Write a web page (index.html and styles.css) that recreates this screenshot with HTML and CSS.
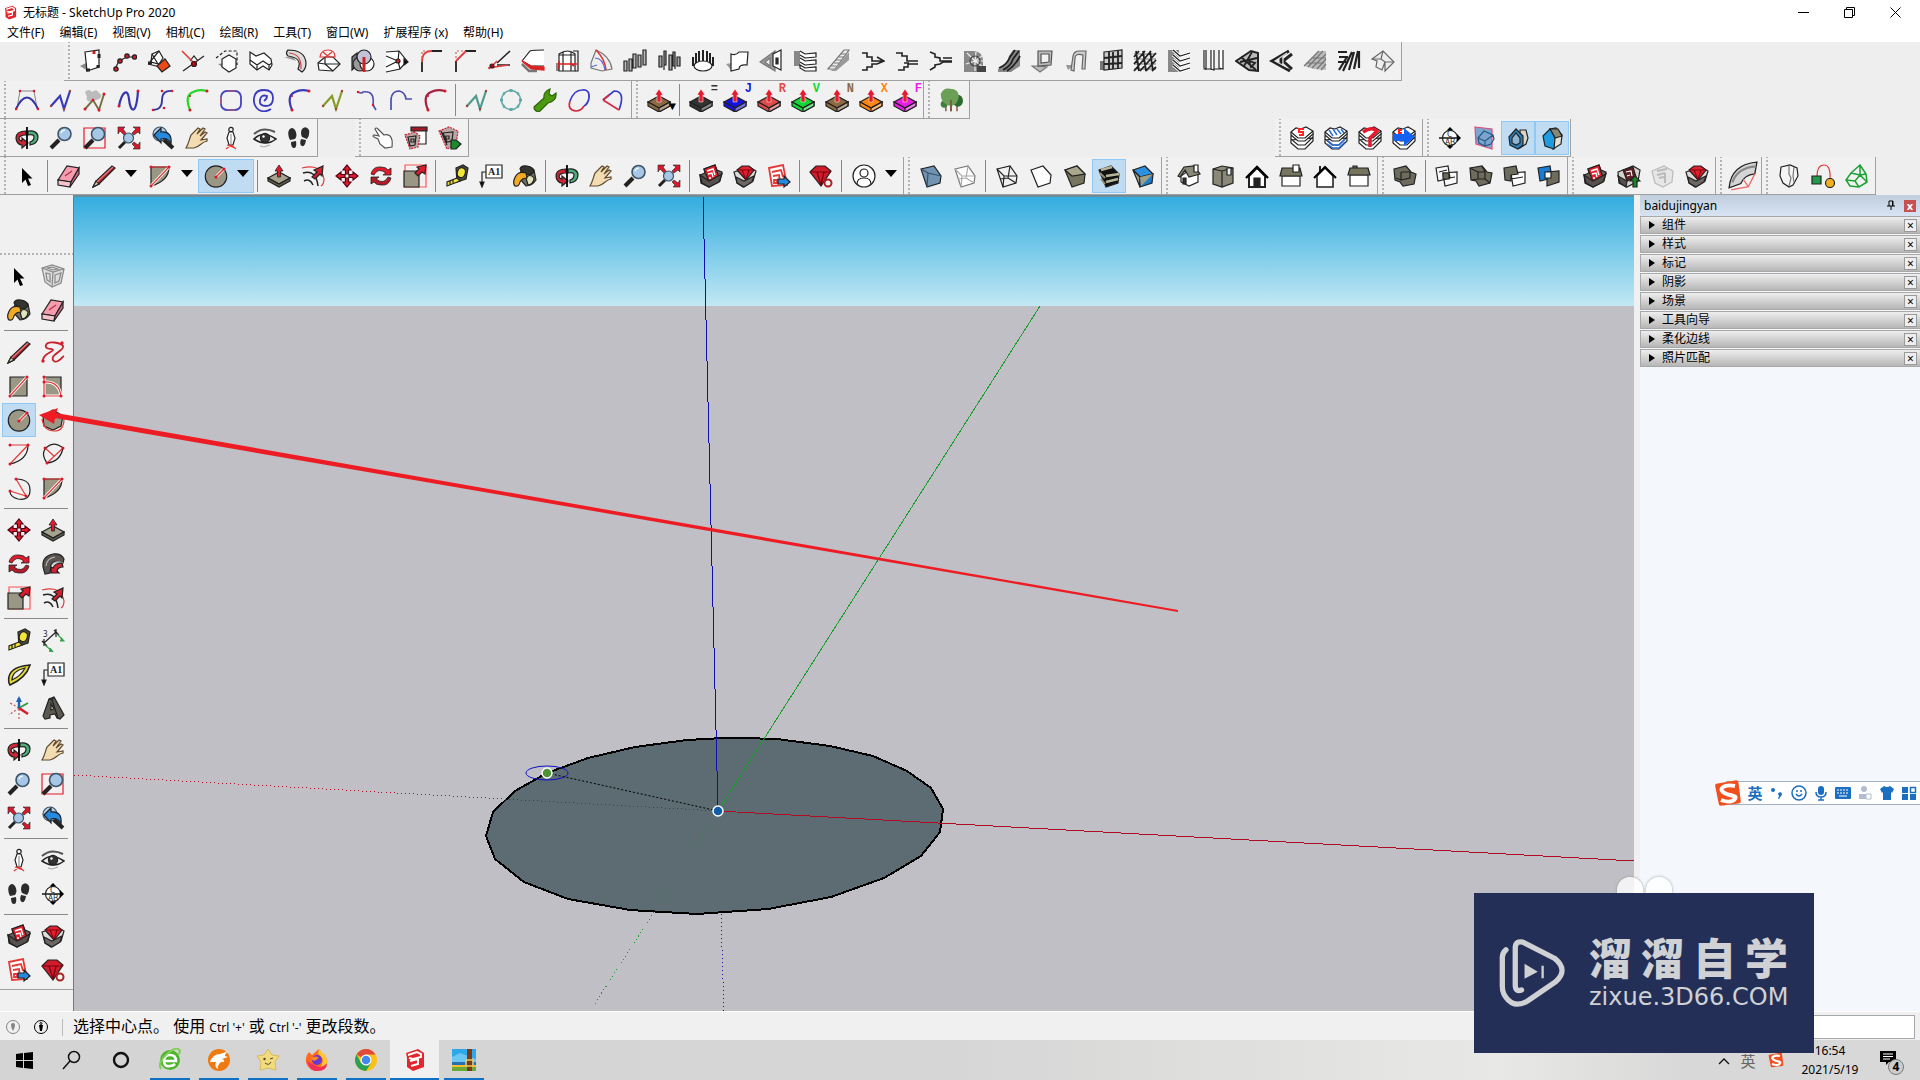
FILE: index.html
```html
<!DOCTYPE html>
<html lang="zh-CN">
<head>
    <meta charset="UTF-8">
    <meta name="viewport" content="width=device-width, initial-scale=1.0">
    <title>无标题 - SketchUp Pro 2020</title>
    <link rel="stylesheet" href="styles.css">
</head>
<body>
    <svg class="sprite" aria-hidden="true">
        <!-- logos -->
        <symbol id="sketchup" viewBox="0 0 24 24"><path d="M3 5 15 1l6 4v14l-11 4-6-4V10z" fill="#e4252c" stroke="none"/><path d="M5 7l9-3 4 2v3l-8 2-4-1M7 13l8-2v5l-7 2" stroke="#fff" stroke-width="2"/></symbol>
        <symbol id="sogou" viewBox="0 0 24 24"><path d="M2 4 19 1q2 0 2 2l2 16q0 2-2 2L6 23q-2 0-2-2L1 6q0-2 1-2z" fill="#f0501e" stroke="none"/><path d="M18 6C8 4 3 9 9 12s11 2 9 5-7 3-12 1" stroke="#fff" stroke-width="3.4"/></symbol>

        <!-- camera and basic tools -->
        <symbol id="select" viewBox="0 0 24 24"><path d="M7 4v15l3.500-3.500L13 22l3-1-3-6.500h4.500z" fill="#000" stroke="none"/></symbol>
        <symbol id="orbit" viewBox="0 0 24 24"><path d="M13 5c6-1 10 2 10 6s-3 7-8 8v-3c3-1 4-3 4-5s-2-3-6-2z" fill="#4fae7c"/><path d="M11 5C4 5 1 8 1 12s3 7 6 7v3l6-5-6-5v3c-2 0-3-2-3-3s2-3 7-3z" fill="#cf2535"/><path d="M12 1v22" stroke="#000" stroke-width="1.800"/></symbol>
        <symbol id="zoom" viewBox="0 0 24 24"><path d="M2 22l8-8" stroke="#222" stroke-width="4"/><circle cx="15.500" cy="8" r="6.500" fill="#a6c8e6" stroke="#3d5468" stroke-width="1.600"/><path d="M12 7q1-3 4-3" stroke="#fff"/></symbol>
        <symbol id="zoom-window" viewBox="0 0 24 24"><path d="M1 2h21v20H1z" stroke="#e8192c"/><path d="M2 22l8-8" stroke="#222" stroke-width="4"/><circle cx="15" cy="8" r="6.500" fill="#a6c8e6" stroke="#3d5468" stroke-width="1.600"/></symbol>
        <symbol id="zoom-extents" viewBox="0 0 24 24"><path d="M1 1h7L6 3l3 4-2 2-4-4-2 3zM23 1v7l-2-2-4 3-2-2 4-4-3-2zM23 23h-7l2-2-3-3 2-2 4 3 2-3z" fill="#d8192b" stroke-width=".6"/><path d="M2 22l6-6" stroke="#222" stroke-width="3"/><circle cx="11.500" cy="12" r="5" fill="#a6c8e6" stroke="#3d5468"/></symbol>
        <symbol id="zoom-previous" viewBox="0 0 24 24"><path d="M12 13l10 9" stroke="#222" stroke-width="4"/><circle cx="9" cy="8" r="7" fill="#b4d0e8" stroke="#3d5468"/><path d="M3 9l7-7v4c8-1 11 4 10 12-2-5-5-6-10-5v4z" fill="#258be0"/></symbol>
        <symbol id="pan" viewBox="0 0 24 24"><path d="M1 22c3-5 3-8 5-13l7-7 2 1-3 5 6-6 2 1-5 7 5-4 2 1-6 7 6-1v2c-6 1-7 6-13 7z" fill="#f4dcb2" stroke="#5d4a30"/></symbol>
        <symbol id="position-camera" viewBox="0 0 24 24"><circle cx="12" cy="3.500" r="2.200" fill="#fff"/><path d="M10 6h4l2 6-2 7h-4l-2-7z" fill="#fff"/><path d="M12 8v10" stroke="#999"/><path d="M7 23l5-4 5 4M8 19l8 3" stroke="#e33"/></symbol>
        <symbol id="look-around" viewBox="0 0 24 24"><path d="M1 13q9-9 22 0-10 8-22 0z" fill="#eee" stroke-width="1.600"/><circle cx="12" cy="12" r="4.600" fill="#333"/><circle cx="10.500" cy="10.500" r="1.200" fill="#fff" stroke="none"/><path d="M1 8q9-8 21-2" stroke="#555" stroke-width="2"/><path d="M7 20l4 1 6-2" stroke="#aaa"/></symbol>
        <symbol id="walk" viewBox="0 0 24 24"><path d="M2 4q3-4 6 0 3 5 0 9l-5 1Q0 8 2 4zM4 16l5-1q1 7-2 7t-3-6zM15 3q4-4 7 1 1 5-2 9l-5-2q-2-4 0-8zM14 13l5 1q-1 7-4 6t-1-7z" fill="#2b2b2b" stroke="none"/></symbol>
        <symbol id="eraser" viewBox="0 0 24 24"><path d="M1 16 10 2l12 2-8 14z" fill="#f79cae"/><path d="M1 16v5l12 2 1-5z" fill="#f6c3cc"/><path d="M14 18l-1 5 9-13V4z" fill="#cf6c83"/><path d="M8 12l7-5" stroke="#a34"/></symbol>
        <symbol id="pencil" viewBox="0 0 24 24"><path d="M1 23l3-6L20 2l3 2L7 20z" fill="#b4222c"/><path d="M1 23l3-6 3 3z" fill="#e9cfa4"/><path d="M5 18 21 3" stroke="#e87c80"/></symbol>
        <symbol id="freehand" viewBox="0 0 24 24"><path d="M2 21C1 14 12 12 12 10S3 10 5 5s15-2 17 1-9 8-10 11 1 6 5 4 4-4 6-5" stroke="#c8202e" stroke-width="1.800"/><g class="dots"><circle cx="2" cy="21" r="1.700"/><circle cx="21" cy="3" r="1.700"/></g></symbol>
        <symbol id="rectangle" viewBox="0 0 24 24"><path d="M3 3h17v19H3z" fill="#9a9885"/><path d="M3 22 20 3" stroke="#fff" stroke-width="3"/><path d="M3 22 20 3" stroke="#e33a3a"/><g class="dots"><circle cx="3" cy="22" r="1.500"/><circle cx="20" cy="3" r="1.500"/></g></symbol>
        <symbol id="rotated-rectangle" viewBox="0 0 24 24"><path d="M3 3h17v19H3z" fill="#9a9885"/><path d="M3 3v19h17M3 8q15-1 17 14" stroke="#fff" stroke-width="3"/><path d="M3 3v19h17M3 8q15-1 17 14" stroke="#e33a3a"/><g class="dots"><circle cx="3" cy="3" r="1.500"/><circle cx="3" cy="8" r="1.500"/><circle cx="3" cy="22" r="1.500"/><circle cx="20" cy="22" r="1.500"/></g></symbol>
        <symbol id="circle" viewBox="0 0 24 24"><circle cx="12" cy="12.500" r="10.700" fill="#9a9885"/><path d="M12 13 20 5" stroke="#fff" stroke-width="3"/><path d="M12 13 20 5" stroke="#e33a3a" stroke-width="1.600"/><g class="dots"><circle cx="12" cy="13" r="1.600"/><circle cx="20" cy="5" r="1.600"/></g></symbol>
        <symbol id="polygon" viewBox="0 0 24 24"><path d="M2 8 12 2l10 6-2 10-8 4-9-4z" fill="#9a9885"/><path d="M1 11q2 12 12 12t10-12M12 12l8-6" stroke="#e33a3a"/></symbol>
        <symbol id="arc" viewBox="0 0 24 24"><path d="M21 3q0 15-18 19"/><path d="M3 22 21 3H3" stroke="#e33a3a"/><g class="dots"><circle cx="3" cy="3" r="1.500"/><circle cx="21" cy="3" r="1.500"/><circle cx="3" cy="22" r="1.500"/></g></symbol>
        <symbol id="arc-2-point" viewBox="0 0 24 24"><path d="M6 21Q-1 11 6 5T22 6"/><path d="M6 21 22 6M4 6l9 8" stroke="#e33a3a"/><path d="M6 21q13-1 16-15"/><g class="dots"><circle cx="6" cy="21" r="1.500"/><circle cx="22" cy="6" r="1.500"/><circle cx="4" cy="6" r="1.500"/></g></symbol>
        <symbol id="arc-3-point" viewBox="0 0 24 24"><path d="M9 3q14 0 14 11T11 23q-8-2-8-8"/><path d="M9 3 19 20 3 15" stroke="#e33a3a"/><g class="dots"><circle cx="9" cy="3" r="1.500"/><circle cx="19" cy="20" r="1.500"/><circle cx="3" cy="15" r="1.500"/></g></symbol>
        <symbol id="pie" viewBox="0 0 24 24"><path d="M3 3h18q0 14-18 19z" fill="#9a9885"/><path d="M3 22 21 3" stroke="#fff" stroke-width="3"/><path d="M3 22 21 3H3" stroke="#e33a3a"/><g class="dots"><circle cx="3" cy="3" r="1.500"/><circle cx="21" cy="3" r="1.500"/><circle cx="3" cy="22" r="1.500"/></g></symbol>
        <symbol id="push-pull" viewBox="0 0 24 24"><path d="M1 14l11-6 11 6-11 6z" fill="#a5a28e"/><path d="M1 14v3l11 6 11-6v-3l-11 6z" fill="#5d5c4c"/><path d="M10.500 13V7H8l4-6 4 6h-2.500v6z" fill="#e01b2c" stroke-width=".8"/></symbol>
        <symbol id="offset" viewBox="0 0 24 24"><path d="M2 9q13-4 15 13M3 17q6-3 9 4" stroke="#222" stroke-width="1.500"/><path d="M1 4Q20-1 23 15q0 5-3 7" stroke="#e33a3a"/><path d="M11 13l5-5-3-2 9-4-1 10-2-2-5 5z" fill="#d11f2e"/></symbol>
        <symbol id="move" viewBox="0 0 24 24"><path d="M12 1l4 5h-2.500v4h-3V6H8zM12 23l4-5h-2.500v-4h-3v4H8zM1 12l5-4v2.500h4v3H6V16zM23 12l-5-4v2.500h-4v3h4V16z" fill="#e01b2c" stroke="#501"/></symbol>
        <symbol id="rotate" viewBox="0 0 24 24"><path d="M2 10Q4 2 12 3q5 0 7 3l3-2v7h-8l3-2q-8-6-12 2z" fill="#e01b2c" stroke-width=".8"/><path d="M22 14q-2 8-10 7-5 0-7-3l-3 2v-7h8l-3 2q8 6 12-2z" fill="#b51a28" stroke-width=".8"/></symbol>
        <symbol id="scale" viewBox="0 0 24 24"><path d="M2 1h21v22H2z" stroke="#f55"/><path d="M1 7h15v16H1z" fill="#9a9885"/><path d="M12 9l4-4-2-2 9-2-1 9-3-2-4 4z" fill="#e01b2c"/></symbol>
        <symbol id="follow-me" viewBox="0 0 24 24"><path d="M2 15Q1 4 12 2q8-1 11 5l-1 4q-9-4-12 2l-1 8-5 1z" fill="#5a5450"/><path d="M5 14Q6 6 14 5M11 13q4-5 11-2" stroke="#bbb"/><path d="M10 21v-6l2 1q2-5 9-5l1 4q-5 0-6 4l2 2z" fill="#cf2535"/></symbol>
        <symbol id="tape-measure" viewBox="0 0 24 24"><path d="M11 4l7-3 5 3-2 11-9 3z" fill="#4a4a3c"/><ellipse cx="16.500" cy="8.500" rx="4" ry="5" fill="#f2e53a" transform="rotate(18 16 8)"/><path d="M12 14 2 18v4l13-5z" fill="#f2e53a"/><path d="M5 17v4M8 16v3"/></symbol>
        <symbol id="dimension" viewBox="0 0 24 24"><path d="M3 15 15 4M1 13l5 5M13 2l5 5M3 11v7M15 1v8"/><path d="M4 17l7 6M16 6l6 6" stroke="#35a24b"/><path d="M20 10l3 3h-4M9 20l3 4-4-1" fill="#35a24b" stroke="#35a24b"/><text class="tiny" x="2" y="9">3</text></symbol>
        <symbol id="protractor" viewBox="0 0 24 24"><path d="M2 21Q-1 5 23 3 19 16 3 23z" fill="#e7d937" stroke-width="1.600"/><path d="M5 18Q5 9 18 6 14 14 5 18z" fill="#f1f1f1"/></symbol>
        <symbol id="text-label" viewBox="0 0 24 24"><path d="M7 1h16v13H7z" fill="#fff"/><path d="M7 8H3v12"/><path d="M1 18h4l-2 5z" fill="#000"/><text class="tiny serif" x="9" y="11">A1</text></symbol>
        <symbol id="axes" viewBox="0 0 24 24"><path d="M12 12 2 19M12 12l-9-5M12 13v10" stroke-dasharray="2 2" stroke="#c55"/><path d="M12 12V2" stroke="#1c62b8" stroke-width="2.400"/><path d="M9 6l3-6 3 6z" fill="#1c62b8" stroke="none"/><path d="M12 12l9-5" stroke="#2a9c46" stroke-width="2"/><path d="M12 12l9 6" stroke="#d8192b" stroke-width="2.400"/></symbol>
        <symbol id="text-3d" viewBox="0 0 24 24"><path d="M2 20 8 3l5-2 10 18-4 4-3-1-2-4-5 1v3l-5 1z" fill="#5c5a50"/><path d="M10 14V8l3 5z" fill="#ddd"/><path d="M8 3l3 1 6 18M13 1l-2 3"/></symbol>
        <symbol id="paint-bucket" viewBox="0 0 24 24"><path d="M8 5q8-5 13 1l2 10q-4 6-10 6l-6-7z" fill="#6d6d60"/><path d="M7 5q1-4 7-3t7 6q-4 4-8 2T7 5z" fill="#35352f"/><path d="M13 14q4-5 8 0 0 6-6 7z" fill="#e3e4bd"/><path d="M13 9Q4 6 1 16q-1 4 1 6 4 1 5-4 2-4 7-4z" fill="#f2ab22"/></symbol>
        <symbol id="component" viewBox="0 0 24 24"><path d="M1 4l10-3 12 4-3 14-9 4-7-5z" fill="#ddd" stroke="#888"/><path d="M1 4l11 4 11-3M12 8l-1 15M5 9l4 1v8l-3-2zM14 11l6-2-2 8-4 2zM6 4l5-1 6 2-5 1z" stroke="#888"/></symbol>
        <symbol id="section-plane" viewBox="0 0 24 24"><circle cx="12" cy="12" r="7.500" fill="#fff"/><path d="M1 12h20" stroke-width="1.600"/><path d="M8.500 4.500 12 1l3.500 3.500zM8.500 19.500 12 23l3.500-3.500zM19 8v8l4-4z" fill="#000" stroke="none"/><text class="tiny" x="9" y="11">C</text><text class="tiny" x="7" y="19">AB</text></symbol>

        <!-- warehouse and extension tools -->
        <symbol id="warehouse" viewBox="0 0 24 24"><path d="M1 11l5-2-1-4 11-4 2 5 5 2-2 9-11 6-8-4z" fill="#6b5f5c"/><path d="M5 5l11-4 4 13-10 4z" fill="#e0222f"/><path d="M8 7l6-2 2 6M9 10l4-1 1 4M10 14h2" stroke="#fff" stroke-width="1.400"/><path d="M1 11l9 6 13-7-3 8-10 5-7-4z" fill="#57504e"/></symbol>
        <symbol id="warehouse-extension" viewBox="0 0 24 24"><path d="M1 8l6-2 9-3 7 4-3 10-10 6-6-4z" fill="#dedbd8"/><path d="M4 6l5-4h7l5 4-8 10z" fill="#e0222f"/><path d="M4 6h17M9 6l4 10 3-10" stroke="#801"/><path d="M3 13l8 4 10-5-2 6-8 5-7-4z" fill="#6d6764"/></symbol>
        <symbol id="send-layout" viewBox="0 0 24 24"><path d="M2 4l14-3 4 20-15 1z" fill="#fff" stroke="#e33a3a" stroke-width="1.800"/><path d="M5 8l9-2 2 7M6 12l6-1 1 7M7 16h3v3H7z" stroke="#e33a3a" stroke-width="1.800"/><path d="M11 15h6v-3l6 6-6 5v-3h-6z" fill="#258be0"/></symbol>
        <symbol id="extension-manager" viewBox="0 0 24 24"><path d="M1 8l6-6h9l6 5-10 15z" fill="#d01b2a"/><path d="M1 8h21M8 8l4 13M15 8l-3 13" stroke="#701"/><circle cx="19" cy="19" r="3.500" fill="#f1f1f1" stroke="#a22" stroke-width="2"/></symbol>
        <symbol id="share-model" viewBox="0 0 24 24"><path d="M1 8l5-2 10-4 7 4-2 11-11 6-8-4z" fill="#d6d3cf"/><path d="M6 6l10-3 3 10-9 4z" fill="#5e2024"/><path d="M9 8l5-1 1 5M10 12l3-1" stroke="#fff"/><path d="M1 12l9 5-1 6-6-4z" fill="#57504e"/><path d="M16 23v-6h-3l5-5 5 5h-3v6z" fill="#178a28"/></symbol>
        <symbol id="share-component" viewBox="0 0 24 24"><path d="M1 7l12-5 9 5-1 11-9 5-8-4z" fill="#e6e6e6" stroke="#bbb"/><path d="M6 7l10-2M6 11l8-2M14 9v10M8 14l5-1" stroke="#bbb" stroke-width="2"/></symbol>
        <symbol id="user" viewBox="0 0 24 24"><circle cx="12" cy="12" r="11" fill="#fff"/><circle cx="12" cy="9" r="4"/><path d="M5 20q0-6 7-6t7 6"/></symbol>
        <symbol id="hand-touch" viewBox="0 0 24 24"><path d="M5 3l4 7-5-1q-2 1 0 2l4 2 2 5 5 4 7-1q1-8-2-11-3-2-6-1L8 3Q6 1 5 3z" fill="#fff" stroke="#555"/></symbol>
        <symbol id="list-component" viewBox="0 0 24 24"><path d="M10 3h12v15H10z" fill="#fff"/><path d="M7 1h16v4H7z" fill="#9d1b26"/><path d="M1 9l10-3 5 4-2 11-8 2z" fill="#b9a7a5" stroke="#c9202e" stroke-dasharray="2 1"/><path d="M4 11l8-1-1 9-5 1zM7 13h3v3H7z"/></symbol>
        <symbol id="export-component" viewBox="0 0 24 24"><path d="M1 5l10-4 9 4-2 14-9 4z" fill="#b9a7a5" stroke="#c9202e" stroke-dasharray="2 1"/><path d="M5 7l10-1-1 9-5 1zM8 10h3v3H8zM3 5l6 14"/><path d="M13 14h5l5 4-5 5h-5z" fill="#1a8a2c"/></symbol>

        <!-- shape and building tools -->
        <symbol id="sheet" viewBox="0 0 24 24"><path d="M1 17l8-4v9z" fill="#888" stroke="none"/><path d="M6 3l14-2v17L8 22z" fill="#fff"/><path d="M15 2v3" stroke="#c22" stroke-width="3"/><path d="M20 5v4M19 16v3M7 21h4" stroke-width="3"/></symbol>
        <symbol id="nodes" viewBox="0 0 24 24"><path d="M2 20 6 12 14 8h8"/><g fill="#d8192b"><circle cx="3" cy="20" r="2.200"/><circle cx="7" cy="12" r="2.200"/><circle cx="14" cy="7" r="2.200"/><circle cx="21.500" cy="8" r="2.200"/></g></symbol>
        <symbol id="face-box" viewBox="0 0 24 24"><path d="M5 5l7-3 4 7-4 6-8-2z" fill="#fff"/><path d="M5 5l6 10M12 2 3 13M1 15l12 3"/><path d="M10 17l8-7 5 7-8 6z" fill="#ee4a16"/><path d="M1 14h4" stroke-width="3"/></symbol>
        <symbol id="cross" viewBox="0 0 24 24"><path d="M2 22 23 7M9 12l4-5 4 5"/><path d="M1 2l12 12" stroke="#e33a3a" stroke-width="1.600"/><circle cx="13" cy="15" r="2.500" fill="#b01"/></symbol>
        <symbol id="hexagon" viewBox="0 0 24 24"><path d="M3 15l8-1 2 8z" fill="#888" stroke="none"/><path d="M1 9 10 2h12v14" stroke-dasharray="3 2"/><path d="M7 10l7-4 7 4v9l-7 4-7-5z" fill="#fff"/></symbol>
        <symbol id="stretch" viewBox="0 0 24 24"><path d="M1 3v12l7 6 6-4 6 4 3-5-1-6-7-6-8 3z" fill="#fff"/><path d="M1 11l7 5 6-4 6 4 3-2M8 16v5M20 16v5"/></symbol>
        <symbol id="pipe" viewBox="0 0 24 24"><path d="M1 8h9l3 4z" fill="#999" stroke="none"/><path d="M5 1q17 0 18 13 0 6-4 9l-4-3q5-11-10-13-3-3 0-6z" fill="#ddd"/><path d="M6 4q13 1 12 16" stroke="#c44"/></symbol>
        <symbol id="dome-box" viewBox="0 0 24 24"><path d="M1 14l7-6h8l7 7-7 7-14-1z" fill="#fff"/><path d="M8 8v7l8 7M1 14l7 1 15 0"/><path d="M3 8q1-7 8-7t7 7zM3 8h15M6 3l6 5M15 3 9 8" stroke="#e33a3a"/></symbol>
        <symbol id="sphere-cut" viewBox="0 0 24 24"><path d="M1 8l5-4v12l-5 5z" fill="#777"/><circle cx="9" cy="15" r="7" fill="#999"/><circle cx="16" cy="15" r="7" fill="#fff"/><circle cx="13" cy="8" r="7" fill="#c3c3d8"/><path d="M13 8v15" stroke="#c22" stroke-width="3"/></symbol>
        <symbol id="prism" viewBox="0 0 24 24"><path d="M1 3l13-1 8 10-7 8-14 3" fill="#fff"/><path d="M1 7l12 5-12 6M14 2l-1 10 2 8"/><circle cx="13" cy="12" r="2" fill="#d22"/><path d="M19 10l4 3-4 3z" fill="#000"/></symbol>
        <symbol id="fillet" viewBox="0 0 24 24"><path d="M3 23V13M12 2h11" stroke-width="1.800"/><path d="M3 13Q3 2 13 2" stroke="#e33a3a" stroke-width="1.800"/><path d="M3 9V2h7" stroke-dasharray="2 2" stroke="#c66"/></symbol>
        <symbol id="chamfer" viewBox="0 0 24 24"><path d="M3 23V12M12 2h11" stroke-width="1.800"/><path d="M3 12 13 2" stroke="#e33a3a" stroke-width="1.800"/><path d="M3 9V2h7" stroke-dasharray="2 2" stroke="#c66"/></symbol>
        <symbol id="angle" viewBox="0 0 24 24"><path d="M10 14 23 2M10 16h13" stroke-width="1.600"/><path d="M1 19l20-3M2 20l8-8" stroke="#e33a3a" stroke-width="1.600"/><circle cx="5" cy="17" r="2" fill="#b01"/></symbol>
        <symbol id="slab" viewBox="0 0 24 24"><path d="M1 9 9 2l14-1v16H10z" fill="#fff" stroke="none"/><path d="M1 12 9 2q3-1 14-1M1 12l9 5h13"/><path d="M1 12l9 5 13 1v3l-13-1z" fill="#d22" stroke="#d22"/><path d="M1 15l7 7h8" stroke="#777" stroke-width="2.500"/></symbol>
        <symbol id="barrel" viewBox="0 0 24 24"><path d="M1 14h4v8H1z" fill="#888" stroke="none"/><path d="M4 5q9-6 16 0v17H4z" fill="#fff"/><path d="M8 3v19M16 3v19M4 6h16M18 2h5v20h-3"/><path d="M4 15h18M4 12v8M15 14l4 3" stroke="#d22" stroke-width="1.600"/></symbol>
        <symbol id="sail" viewBox="0 0 24 24"><path d="M2 14 7 1q14 6 16 19l-10 2-11-3z" fill="#eee" stroke="#777"/><path d="M7 1q9 9 10 20" stroke="#d33" stroke-width="1.600"/><path d="M6 9q8 0 10 12M2 18l6-2" stroke="#66c"/></symbol>
        <symbol id="columns" viewBox="0 0 24 24"><path d="M1 12h3v10H1zM6 10h3v12H6zM10 5h3v14h-3zM15 6h3v12h-3zM20 1h3v15h-3z" fill="#bbb"/></symbol>
        <symbol id="posts" viewBox="0 0 24 24"><path d="M2 7h3v11H2zM7 2h2v14H7zM12 6h3v15h-3zM16 3h2v14h-2zM20 8h3v9h-3zM7 10v11M18 9v11" fill="#aaa"/></symbol>
        <symbol id="round-posts" viewBox="0 0 24 24"><path d="M2 8v9M5 4v12M8 2v14M12 1v15M16 2v14M19 4v12M22 8v9" stroke-width="2"/><ellipse cx="12" cy="17" rx="9" ry="5" fill="#fff"/></symbol>
        <symbol id="curved-wall" viewBox="0 0 24 24"><path d="M1 15l6-1v8z" fill="#999" stroke="none"/><path d="M6 5q5 2 8-2h9l-1 13q-8-1-8 4l-8 2z" fill="#fff"/></symbol>
        <symbol id="window-wall" viewBox="0 0 24 24"><path d="M1 13 16 2v20z" fill="#999" stroke="#777"/><path d="M6 13l5-4v8z" fill="#f1f1f1" stroke="#777"/><path d="M14 5l8-4v20l-8-4z" fill="#fff"/><path d="M17 9h2v6h-2z" fill="#333"/></symbol>
        <symbol id="shelves" viewBox="0 0 24 24"><path d="M1 2h6v15H1z" fill="#888" stroke="none"/><path d="M7 2l5 3 11-1v4l-11 1-5-3M7 9l5 3 11-1v4l-11 1-5-3M7 16l5 3 11-1v4H12l-5-3z" fill="#fff"/></symbol>
        <symbol id="ramp" viewBox="0 0 24 24"><path d="M1 20 17 1h5L8 20z" fill="#eee" stroke="#777"/><path d="M3 22 8 20 22 3v8L9 22z" fill="#999" stroke="none"/><path d="M4 17h5M7 14h5M9 11h5M12 8h5M14 5h5" stroke="#777"/></symbol>
        <symbol id="stairs-up" viewBox="0 0 24 24"><path d="M1 4h5v4h5v4h12l-7-4M1 21h5v-3h5v-3h5l7-3" stroke-width="1.600"/></symbol>
        <symbol id="stairs-landing" viewBox="0 0 24 24"><path d="M1 4h6v3h5v5h11M3 21h6v-3h4v-3h10M9 14h5" stroke-width="1.600"/></symbol>
        <symbol id="stairs-branch" viewBox="0 0 24 24"><path d="M1 3l5 2v3l5 1v3h12M1 21l5-3v-2l5-1 3-2h9M14 9h9" stroke-width="1.600"/></symbol>
        <symbol id="spiral-stairs" viewBox="0 0 24 24"><path d="M1 2h10q9 1 9 10v11H1z" fill="#888" stroke="none"/><path d="M12 12 4 4M12 12l1-9M12 12l7-5M12 12h8M12 12l8 6M12 12v10M12 12l-9 3" stroke="#eee"/><circle cx="12" cy="12" r="5" stroke="#444"/><path d="M14 17h9v6h-9z" fill="#444" stroke="none"/></symbol>
        <symbol id="escalator" viewBox="0 0 24 24"><path d="M1 20Q10 16 12 7l4-6h7v16l-9 6H1z" fill="#888" stroke="none"/><path d="M2 19q8-3 11-11l5-7M6 21q8-4 10-11l6-8M10 22q8-5 13-15" stroke-width="1.800"/></symbol>
        <symbol id="frame" viewBox="0 0 24 24"><path d="M1 17h6l9 1-7 5z" fill="#bbb" stroke="#777"/><path d="M7 2h14l-1 14-13 1z" fill="#bbb" stroke="#555"/><path d="M10 5h8v8l-8 1z" fill="#f1f1f1" stroke="#555"/></symbol>
        <symbol id="arch" viewBox="0 0 24 24"><path d="M1 16h8l-6 5z" fill="#999" stroke="none"/><path d="M6 21 8 7q1-5 6-5h7l-1 18h-3l1-14q-8-2-8 3l-1 13z" fill="#ccc" stroke="#666"/></symbol>
        <symbol id="lattice" viewBox="0 0 24 24"><path d="M1 12h4v9H1z" fill="#777" stroke="none"/><path d="M5 3l18-2v18L5 21z" fill="#ccc"/><path d="M10 3v17M14 3v17M19 2v17M5 9l18-2M5 15l18-1" stroke-width="1.800"/></symbol>
        <symbol id="mesh" viewBox="0 0 24 24"><path d="M1 5h22M1 10h22M1 15h22M1 20h22" stroke="#777"/><path d="M1 8 6 2M1 15 12 2M1 22 18 2M7 22 23 4M13 22l10-11M19 22l4-4M3 2l3 20M10 2l3 20M17 2l3 20" stroke-width="1.800"/></symbol>
        <symbol id="louvers" viewBox="0 0 24 24"><path d="M1 1h11v22H1z" fill="#888" stroke="none"/><path d="M6 1l7 6 10-3M6 6l7 6 10-3M6 11l7 6 10-3M6 16l7 6 10-3" stroke="#fff" stroke-width="3"/><path d="M6 1l7 6 10-3M6 6l7 6 10-3M6 11l7 6 10-3M6 16l7 6 10-3"/></symbol>
        <symbol id="curtain" viewBox="0 0 24 24"><path d="M1 21l5-2h14v2z" fill="#888" stroke="none"/><path d="M3 1v18l2 1V1M10 1v19l3 1V1M18 1v18l4 1V1" fill="#fff"/></symbol>
        <symbol id="truss" viewBox="0 0 24 24"><path d="M1 12 16 2l7 2v18l-9-1z" fill="#bbb" stroke-width="2"/><path d="M6 8l15 13M17 3 9 17M5 13l17-4M14 12l6 2-4 4z" stroke-width="1.800"/></symbol>
        <symbol id="truss-open" viewBox="0 0 24 24"><path d="M20 2 3 12l18 10M12 7v11M14 12l9-7M14 12l9 8" stroke-width="3"/><path d="M18 4 6 12l13 7M14 8v9" stroke="#ddd"/></symbol>
        <symbol id="slats" viewBox="0 0 24 24"><path d="M1 17 15 2h8v19L11 20z" fill="#bbb" stroke="none"/><path d="M1 17 16 2M5 18 20 2M9 19 23 5M14 20l9-10M18 21l5-6M3 14h18M8 9h15" stroke="#777"/></symbol>
        <symbol id="rafters" viewBox="0 0 24 24"><path d="M1 3h9M2 8h9M1 13h9M2 21l8-13M6 22l9-19M12 21l5-18M17 20l4-18M22 19V2" stroke-width="2.200"/></symbol>
        <symbol id="roof" viewBox="0 0 24 24"><path d="M1 10 12 2l11 11-9 9V13l-3 8-6-3 1-6z" fill="#eee" stroke="#666"/><path d="M1 10h9l4 3 9 0M10 10l2-8" stroke="#666"/></symbol>

        <!-- curve tools -->
        <symbol id="curve-bezier" viewBox="0 0 24 24"><path d="M5 3h14M5 3 2 20M19 3l3 17" stroke="#888" stroke-width="1"/><path d="M1 21Q12-2 23 21" stroke="#3636a0" stroke-width="2"/><g class="dots"><circle cx="5" cy="3" r="1.300"/><circle cx="19" cy="3" r="1.300"/><circle cx="1" cy="21" r="1.300"/><circle cx="23" cy="21" r="1.300"/></g></symbol>
        <symbol id="curve-polyline" viewBox="0 0 24 24"><path d="M2 18 11 8l4 13 6-18" stroke="currentColor" stroke-width="2.200"/><g class="dots dots-small"><circle cx="2" cy="18" r="1.200"/><circle cx="15" cy="21" r="1.200"/><circle cx="21" cy="3" r="1.200"/></g></symbol>
        <symbol id="curve-point" viewBox="0 0 24 24"><path d="M2 4q4-4 7 0 5-4 7 1 5 3 0 6l-8 3q-6-1-4-5z" fill="#bbb" stroke="none"/><path d="M2 21l8-9 6 10 5-16" stroke="#7b6c40" stroke-width="1.900"/><g class="dots"><circle cx="2" cy="21" r="1.500"/><circle cx="10" cy="12" r="1.300"/><circle cx="16" cy="22" r="1.500"/><circle cx="21" cy="6" r="1.500"/></g></symbol>
        <symbol id="curve-spline" viewBox="0 0 24 24"><path d="M2 18C5 3 11 0 12 11s7 20 9-8" stroke="#3636b0" stroke-width="2.200"/><g class="dots"><circle cx="2" cy="18" r="1.500"/><circle cx="21" cy="3" r="1.500"/></g></symbol>
        <symbol id="curve-s" viewBox="0 0 24 24"><path d="M2 22q9 0 9-10t10-9" stroke="#3636a0" stroke-width="1.800"/><g class="dots"><circle cx="2" cy="22" r="1.300"/><circle cx="13" cy="20" r="1.300"/><circle cx="11" cy="3" r="1.300"/><circle cx="21" cy="3" r="1.300"/></g></symbol>
        <symbol id="curve-arc" viewBox="0 0 24 24"><path d="M5 22Q-1 8 8 4q6-3 14-1" stroke="currentColor" stroke-width="2.200"/><g class="dots"><circle cx="5" cy="22" r="1.500"/><circle cx="5" cy="8" r="1.100"/><circle cx="22" cy="3" r="1.500"/></g></symbol>
        <symbol id="curve-rounded" viewBox="0 0 24 24"><rect x="2" y="3" width="20" height="19" rx="6" stroke="#4444c0" stroke-width="1.800"/><path d="M8 3h8M8 22h8M2 9v7" stroke="#c66"/></symbol>
        <symbol id="curve-spiral" viewBox="0 0 24 24"><path d="M11 13q3-2 3-5-6-2-7 4t6 6 7-8-9-8-10 8 5 12q6 3 12-1" stroke="#3b3bc0" stroke-width="1.800"/></symbol>
        <symbol id="curve-step" viewBox="0 0 24 24"><path d="M3 4q4 2 5 0 12-2 10 13l3 5" stroke="#5050b0" stroke-width="1.700"/><g class="dots"><circle cx="3" cy="4" r="1.200"/><circle cx="18" cy="17" r="1.200"/></g></symbol>
        <symbol id="curve-hook" viewBox="0 0 24 24"><path d="M2 22V11Q3 3 10 3q6 1 7 8h6" stroke="#4b4bb0" stroke-width="1.700"/></symbol>
        <symbol id="curve-ring" viewBox="0 0 24 24"><circle cx="12" cy="12" r="9.500" stroke="#5faaa8" stroke-width="1.600"/><path d="M12 1v3M12 20v3M1 12h3M20 12h3M4 5l2 1M20 5l-2 1M4 19l2-1M20 19l-2-1" stroke="#5faaa8" stroke-width="3"/></symbol>
        <symbol id="wrench" viewBox="0 0 24 24"><path d="M1 19l10-9q-1-6 6-9l-1 5 3 2 4-3q1 8-8 10l-9 9q-5-1-5-5z" fill="#4b9a10" stroke="#2b6407"/></symbol>
        <symbol id="curve-closed" viewBox="0 0 24 24"><path d="M3 13Q7 2 15 2q8-1 7 8-1 6-5 8" stroke="#3b3bc8" stroke-width="1.700"/><path d="M3 13Q0 22 9 23q5 0 8-5" stroke="#d22b44" stroke-width="1.700"/></symbol>
        <symbol id="curve-leaf" viewBox="0 0 24 24"><path d="M2 12 13 3q12 0 5 19" stroke="#3b3bc8" stroke-width="1.700"/><path d="M2 12l16 10M2 12l6-5" stroke="#d22b44" stroke-width="1.700"/></symbol>
        <symbol id="joint" viewBox="0 0 24 24"><path d="M1 14l11-6 11 6-11 6z" fill="currentColor"/><path d="M1 14v4l11 6 11-6v-4l-11 6z" fill="currentColor"/><path d="M12 20l11-6v4l-11 6z" fill="#fff" fill-opacity=".4"/><path d="M10 14V7H8l4-6 4 6h-2v7z" fill="#e8192c" stroke="#fff" stroke-width=".5"/></symbol>
        <symbol id="trees" viewBox="0 0 28 28"><path d="M8 14v13M14 14v13M21 16v11" stroke="#7b4a34" stroke-width="1.600"/><ellipse cx="22" cy="15" rx="6" ry="7" fill="#2f6a32" stroke="none"/><circle cx="6" cy="19" r="4" fill="#3f7f3c" stroke="none"/><path d="M2 7q4-8 11-6 10 0 10 9-1 10-9 11Q2 19 2 7z" fill="#69a055" stroke="none"/><path d="M14 14v13" stroke="#7b4a34" stroke-width="1.600"/></symbol>

        <!-- face styles, views, solid tools -->
        <symbol id="layers" viewBox="0 0 24 24"><path d="M1 14v3l7 6h7l8-8v-3zM1 10v3l7 6h7l8-8V8z" fill="#fff"/><path d="M1 6l5-4 5 1 5-2 7 4v3l-8 7H8L1 9z" fill="#fff"/><path d="M1 6l7 6h7l8-7"/></symbol>
        <symbol id="layers-red" viewBox="0 0 24 24"><use href="#layers"/><path d="M14 3H9v3h4v3H9" stroke="#f22" stroke-width="2"/></symbol>
        <symbol id="layers-blue" viewBox="0 0 24 24"><use href="#layers"/><path d="M5 4l4 6M9 3l4 6M13 3l4 5M17 3l3 4M3 14l6 5h6l6-6M3 18l6 4h6l6-6" stroke="#2b6fd6" stroke-width="1.500"/></symbol>
        <symbol id="layers-help" viewBox="0 0 24 24"><use href="#layers"/><path d="M5 6q9-6 14-1l-7 7v9" stroke="#e8192c" stroke-width="3.500"/></symbol>
        <symbol id="layers-next" viewBox="0 0 24 24"><use href="#layers"/><path d="M1 8h11V2l11 9-11 9v-5H1z" fill="#1463f0" stroke="none"/><path d="M10 4H7v3h3" stroke="#f22" stroke-width="2"/></symbol>
        <symbol id="xray" viewBox="0 0 24 24"><path d="M2 5l13-3 7 10-1 7-13 4z" fill="#7194b4"/><path d="M2 5l7 4 13 3M9 9l-1 14" stroke="#35506a"/></symbol>
        <symbol id="back-edges" viewBox="0 0 24 24"><path d="M2 5l13-3 7 10-1 7-13 4z" fill="#fff" stroke="#777"/><path d="M2 5l7 7 13 0M9 12l-1 11M15 2l-2 12-8 1M13 14l8 5" stroke="#aaa"/></symbol>
        <symbol id="wireframe" viewBox="0 0 24 24"><path d="M2 5l13-3 7 10-1 7-13 4z"/><path d="M2 5l7 7 13 0M9 12l-1 11M15 2l-2 12-8 1M13 14l8 5"/></symbol>
        <symbol id="hidden-line" viewBox="0 0 24 24"><path d="M2 6l12-4 8 9-1 8-12 4z" fill="#fff"/></symbol>
        <symbol id="shaded" viewBox="0 0 24 24"><path d="M2 6l12-4 8 8-1 9-12 4z" fill="#77755f"/><path d="M2 6l12-4 8 8-13 2z" fill="#aaa78f"/></symbol>
        <symbol id="textured" viewBox="0 0 24 24"><path d="M2 6l12-4 8 8-1 9-12 4z" fill="#111"/><path d="M4 6l11-3M9 12l13-2M9 18l12-3" stroke="#b8b59c" stroke-width="2.400"/><path d="M3 9l5 5M4 15l4 5" stroke="#8f8c78" stroke-width="2"/></symbol>
        <symbol id="monochrome" viewBox="0 0 24 24"><path d="M2 6l12-4 8 8-13 3z" fill="#2d8fe0"/><path d="M2 6l7 7v10z" fill="#a19f86"/><path d="M9 13l13-3-1 9-12 4z" fill="#1b7fd0"/><path d="M9 13l13-3-12 12z" fill="#a19f86" stroke="none"/></symbol>
        <symbol id="view-iso" viewBox="0 0 24 24"><path d="M4 12l7-5 10 3v8l-9 4-8-4z" fill="#fff"/><path d="M1 12 7 3l10-1 6 8-11 3-4-7-5 7z" fill="#8a8876"/><path d="M17 1h4v7h-4z" fill="#fff"/><path d="M6 14h3v6H6z" fill="#333"/></symbol>
        <symbol id="view-top" viewBox="0 0 24 24"><path d="M2 5l9-3 11 2v15l-11 4-9-3z" fill="#8a8876"/><path d="M11 7v16M2 5l9 2 11-3"/><path d="M16 4h4v7h-4z" fill="#eee"/></symbol>
        <symbol id="view-front" viewBox="0 0 24 24"><path d="M4 12v11h16V12l-8-8z" fill="#fff" stroke-width="2"/><path d="M1 14 12 3l11 11" stroke="#000" stroke-width="2.400"/><path d="M9 14h6v9H9z" fill="#222"/></symbol>
        <symbol id="view-right" viewBox="0 0 24 24"><path d="M3 12h18v10H3z" fill="#fff"/><path d="M3 4h18l2 8H1z" fill="#77755f"/><path d="M14 1h6v7h-6z" fill="#fff"/></symbol>
        <symbol id="view-back" viewBox="0 0 24 24"><path d="M7 2v7" stroke-width="2"/><path d="M4 12v11h16V12l-8-8z" fill="#fff" stroke-width="1.600"/><path d="M1 14 12 3l11 11" stroke="#000" stroke-width="2"/></symbol>
        <symbol id="view-left" viewBox="0 0 24 24"><path d="M3 11h18v11H3z" fill="#fff"/><path d="M3 4h18l2 7H1zM6 2h4v2H6z" fill="#77755f"/></symbol>
        <symbol id="section-display" viewBox="0 0 24 24"><path d="M3 1l17 2v20L4 18z" fill="#7ba5cf" stroke="#e04a78"/><path d="M6 12l6-7 9 4 1 4-3 5-6 2-6-3zM6 12l7 3 8-6M13 15v5" stroke="#245b88"/></symbol>
        <symbol id="section-cut" viewBox="0 0 24 24"><path d="M14 4h6l2 8-2 6-6 4z" fill="#d9d5c8"/><path d="M3 11l7-8 7 7v9l-5 4-8-4z" fill="#2b7fb9"/><path d="M6 12l4-5 4 5v5l-4 2-4-2z" fill="#8fb4cf"/></symbol>
        <symbol id="section-fill" viewBox="0 0 24 24"><path d="M10 3l6-1 6 7-1 9-8 5z" fill="#e4e0d4"/><path d="M10 3h8l4 7-7 2z" fill="#8a8876"/><path d="M3 10l7-7 5 9-1 11-9-3z" fill="#1f9be0"/></symbol>
        <symbol id="solid-shell" viewBox="0 0 24 24"><path d="M1 5l12-3 5 6 5 2-2 10-11 2-3-4-5-2z" fill="#6e6c5c"/><path d="M8 8h10M8 8v8l9-2V8M3 14l5 2"/></symbol>
        <symbol id="solid-intersect" viewBox="0 0 24 24"><path d="M1 4l12-2 2 12-12 3zM8 9l14-1v11l-12 3zM4 8l8-2M8 15l12-2" fill="#fff" fill-opacity=".6"/><path d="M8 9h6v6H8z" fill="#6e6c5c"/></symbol>
        <symbol id="solid-union" viewBox="0 0 24 24"><path d="M1 4l12-2 5 6 5 1-2 10-11 3-3-5-5-1z" fill="#6e6c5c"/><path d="M9 8h7v7H9zM1 4l8 4M16 15l5 4M9 15l-6 1M16 8l-3-6"/></symbol>
        <symbol id="solid-subtract" viewBox="0 0 24 24"><path d="M8 9l14-1v11l-12 3zM8 15l12-2" fill="#fff"/><path d="M1 4l12-2 2 8-7 1v6l-6-1z" fill="#6e6c5c"/></symbol>
        <symbol id="solid-split" viewBox="0 0 24 24"><path d="M1 4l12-2 2 12-12 3z" fill="#1a7bd0"/><path d="M10 8l12-1v11l-12 4z" fill="#6e6c5c"/><path d="M8 8h6v6H8z" fill="#fff"/></symbol>
        <symbol id="section-arc" viewBox="0 0 28 28"><path d="M1 25Q3 3 27 1l-2 11q-10 1-13 9z" fill="#d5d5d5"/><path d="M4 20Q9 6 26 5" stroke="#888" stroke-width="2"/><path d="M3 27l16-3 6-12M19 24l-5-7" stroke="#e66"/></symbol>
        <symbol id="stone" viewBox="0 0 24 24"><path d="M4 3l9-2 7 3 1 8-5 9-4 2-6-4-3-7z" fill="#f5f5f5"/><path d="M12 2v8l2 4-2 8M17 3l-1 9 1 6" stroke="#777"/></symbol>
        <symbol id="transfer" viewBox="0 0 24 24"><path d="M6 13Q6 1 13 1t6 15" stroke="#e33a3a"/><path d="M1 12h9v8H1z" fill="#1f9a4c"/><circle cx="19" cy="19" r="4.500" fill="#f0b020"/></symbol>
        <symbol id="gem-green" viewBox="0 0 24 24"><path d="M15 1 6 9l-5 7 4 6 9 1 8-5-1-8zM6 9l9 2 6-1M15 1v10l-5 6-9-1M10 17l4 6M15 11l7 7" stroke="#1aa033" stroke-width="1.500"/></symbol>
    </svg>

    <div class="app">
        <header class="titlebar">
            <svg class="icon app-logo"><use href="#sketchup"/></svg>
            <h1>无标题 - SketchUp Pro 2020</h1>
            <div class="window-controls">
                <button type="button" aria-label="最小化"><svg viewBox="0 0 11 11"><path d="M0 5.500h11"/></svg></button>
                <button type="button" aria-label="还原"><svg viewBox="0 0 11 11"><path d="M.5 2.500h8v8h-8zM2.500 2V.5h8v8H9"/></svg></button>
                <button type="button" aria-label="关闭"><svg viewBox="0 0 11 11"><path d="M.5.5l10 10M10.500.5l-10 10"/></svg></button>
            </div>
        </header>

        <nav class="menubar">
            <button type="button">文件(F)</button>
            <button type="button">编辑(E)</button>
            <button type="button">视图(V)</button>
            <button type="button">相机(C)</button>
            <button type="button">绘图(R)</button>
            <button type="button">工具(T)</button>
            <button type="button">窗口(W)</button>
            <button type="button">扩展程序 (x)</button>
            <button type="button">帮助(H)</button>
        </nav>

        <!-- toolbars are filled by tools.js from data-tools -->
        <div class="toolbars">
            <div class="toolbar-row row-building">
                <div class="toolbar" data-tools="sheet nodes face-box cross hexagon stretch pipe dome-box sphere-cut prism fillet chamfer angle slab barrel sail columns posts round-posts curved-wall window-wall shelves ramp stairs-up stairs-landing stairs-branch spiral-stairs escalator frame arch lattice mesh louvers curtain truss truss-open slats rafters roof"></div>
            </div>
            <div class="toolbar-row">
                <div class="toolbar" data-tools="curve-bezier curve-polyline:indigo curve-point curve-spline curve-s curve-arc:lime curve-rounded curve-spiral curve-arc:indigo curve-polyline:olive curve-step curve-hook curve-arc:crimson | curve-polyline:teal curve-ring wrench curve-closed curve-leaf"></div>
                <div class="toolbar" data-tools="joint:brown:▼ | joint:black:= joint:blue:J joint:red:R joint:green:V joint:brown:N joint:orange:X joint:magenta:F"></div>
                <div class="toolbar" data-tools="trees"></div>
            </div>
            <div class="toolbar-row">
                <div class="toolbar" data-tools="orbit zoom zoom-window zoom-extents zoom-previous pan position-camera look-around walk"></div>
                <div class="toolbar toolbar-components" data-tools="hand-touch list-component export-component"></div>
                <div class="toolbar toolbar-layers" data-tools="layers-red layers-blue layers-help layers-next"></div>
                <div class="toolbar" data-tools="section-plane section-display section-cut* section-fill*"></div>
            </div>
            <div class="toolbar-row">
                <div class="toolbar" data-tools="select | eraser pencil+ pie+ circle+* | push-pull offset move rotate scale | tape-measure text-label paint-bucket | orbit pan zoom zoom-extents | warehouse warehouse-extension send-layout | extension-manager | user+"></div>
                <div class="toolbar" data-tools="xray back-edges | wireframe hidden-line shaded textured* monochrome"></div>
                <div class="toolbar" data-tools="view-iso view-top view-front view-right view-back view-left"></div>
                <div class="toolbar" data-tools="solid-shell | solid-intersect solid-union solid-subtract solid-split"></div>
                <div class="toolbar" data-tools="warehouse share-model share-component warehouse-extension"></div>
                <div class="toolbar toolbar-large" data-tools="section-arc"></div>
                <div class="toolbar" data-tools="stone transfer gem-green"></div>
            </div>
        </div>

        <main class="workspace">
            <div class="sidebar">
                <div class="toolset" data-tools="select component paint-bucket eraser | pencil freehand rectangle rotated-rectangle circle* polygon arc arc-2-point arc-3-point pie | move push-pull rotate follow-me scale offset | tape-measure dimension protractor text-label axes text-3d | orbit pan zoom zoom-window zoom-extents zoom-previous | position-camera look-around walk section-plane | warehouse warehouse-extension send-layout extension-manager"></div>
            </div>

            <div class="viewport">
                <svg class="scene" viewBox="0 0 1560 814" preserveAspectRatio="xMidYMin slice">
                    <defs>
                        <linearGradient id="sky" x1="0" y1="0" x2="0" y2="1">
                            <stop offset="0" stop-color="#33ade0"/>
                            <stop offset="1" stop-color="#c2e8f3"/>
                        </linearGradient>
                    </defs>
                    <rect width="1560" height="815" fill="#bfbfc5"/>
                    <rect width="1560" height="109" fill="url(#sky)"/>
                    <polygon class="disc" points="669,541 703,542 756,549 799,559 833,574 857,591 869,612 866,635 847,659 810,681 757,700 694,712 623,717 556,713 494,702 450,685 421,662 412,639 419,615 441,594 473,576 514,561 561,550 613,543 649,541"/>
                    <path class="axis red" d="M644 614 1560 664"/>
                    <path class="axis red dotted" d="M644 614 0 578"/>
                    <path class="axis green" d="M644 614 966 109"/>
                    <path class="axis green dotted faint" d="M644 614 580 715"/>
                    <path class="axis green dotted" d="M580 715 520 808"/>
                    <path class="axis blue" d="M644 614 629 0"/>
                    <path class="axis blue dotted" d="M647 717 650 815"/>
                    <path class="radius" d="M473 576 644 614"/>
                    <ellipse class="cursor" cx="473" cy="576" rx="21" ry="7"/>
                    <circle class="node node-edge" cx="473" cy="576" r="5"/>
                    <circle class="node node-center" cx="644" cy="614" r="5"/>
                </svg>
            </div>

            <aside class="tray">
                <div class="tray-header">
                    <h2>baidujingyan</h2>
                    <button type="button" class="pin" aria-label="固定"><svg viewBox="0 0 10 10"><path d="M3 6V1h4v5M1 6h8M5 6v4M6.500 1v5"/></svg></button>
                    <button type="button" class="close" aria-label="关闭">x</button>
                </div>
                <div class="panel"><button type="button" class="panel-title">组件</button><button type="button" class="panel-close" aria-label="关闭组件">×</button></div>
                <div class="panel"><button type="button" class="panel-title">样式</button><button type="button" class="panel-close" aria-label="关闭样式">×</button></div>
                <div class="panel"><button type="button" class="panel-title">标记</button><button type="button" class="panel-close" aria-label="关闭标记">×</button></div>
                <div class="panel"><button type="button" class="panel-title">阴影</button><button type="button" class="panel-close" aria-label="关闭阴影">×</button></div>
                <div class="panel"><button type="button" class="panel-title">场景</button><button type="button" class="panel-close" aria-label="关闭场景">×</button></div>
                <div class="panel"><button type="button" class="panel-title">工具向导</button><button type="button" class="panel-close" aria-label="关闭工具向导">×</button></div>
                <div class="panel"><button type="button" class="panel-title">柔化边线</button><button type="button" class="panel-close" aria-label="关闭柔化边线">×</button></div>
                <div class="panel"><button type="button" class="panel-title">照片匹配</button><button type="button" class="panel-close" aria-label="关闭照片匹配">×</button></div>
            </aside>

            <svg class="pointer-arrow" viewBox="0 0 1200 440" aria-hidden="true">
                <path d="M39 220 58 213 56 218 1178 415 1178 417 55 223 54 229z"/>
            </svg>
        </main>

        <footer class="statusbar">
            <svg class="status-icon muted" viewBox="0 0 14 14"><circle cx="7" cy="7" r="6.500"/><path d="M7 3a2 2 0 0 1 2 2q0 2-2 6-2-4-2-6a2 2 0 0 1 2-2z"/></svg>
            <svg class="status-icon" viewBox="0 0 14 14"><circle cx="7" cy="7" r="6.500"/><circle cx="7" cy="3.500" r="1"/><path d="M5 5h4l-1 6H6z"/></svg>
            <p>选择中心点。 使用 <kbd>Ctrl '+'</kbd> 或 <kbd>Ctrl '-'</kbd> 更改段数。</p>
            <input type="text" class="measurements" aria-label="数值">
        </footer>

        <footer class="taskbar">
            <button type="button" class="task task-start" aria-label="开始"><svg viewBox="0 0 24 24"><path d="M4 6l7-1v7H4zM12 5l9-1v8h-9zM4 13h7v7l-7-1zM12 13h9v8l-9-1z" fill="#000"/></svg></button>
            <button type="button" class="task" aria-label="搜索"><svg viewBox="0 0 24 24"><circle cx="14" cy="9" r="5.500" class="outline"/><path d="M10 13l-7 8" class="outline"/></svg></button>
            <button type="button" class="task" aria-label="Cortana"><svg viewBox="0 0 24 24"><circle cx="12" cy="12" r="7" class="outline thick"/></svg></button>
            <button type="button" class="task running" aria-label="浏览器"><svg viewBox="0 0 24 24"><circle cx="12" cy="12" r="10" fill="#4db52c"/><path d="M6 13h12q0-6-6-6t-6 6 6 5q3 0 5-2" fill="none" stroke="#fff" stroke-width="2.600"/><path d="M3 21Q-1 15 9 6t13-3q0 2-2 4" fill="none" stroke="#7fcf58" stroke-width="2"/></svg></button>
            <button type="button" class="task running" aria-label="极速浏览器"><svg viewBox="0 0 24 24"><circle cx="12" cy="12" r="11" fill="#f07a12"/><path d="M3 14Q6 6 13 6l9-3q-4 2-4 5l3 1-6 2q3 1 2 3-3-1-5 2-2 3-1 5-4-2-2-7z" fill="#fff"/></svg></button>
            <button type="button" class="task running" aria-label="星星"><svg viewBox="0 0 24 24"><path d="M12 1l4 6 7 1-4 6 1 8-8-2-8 2 1-8-4-6 7-1z" fill="#f2db7d" stroke="#d9bb58" stroke-linejoin="round"/><circle cx="8.500" cy="11" r="1.200" fill="#543"/><path d="M14 11l3-1M9 15q4 3 6-1" fill="none" stroke="#543"/></svg></button>
            <button type="button" class="task running" aria-label="Firefox"><svg viewBox="0 0 24 24"><path d="M12 23A11 11 0 0 1 2 7l2-3 3 3 7-6q2 4 6 6 4 7 1 11t-9 5z" fill="#ff6a1f"/><path d="M14 1q3 4 6 6 3 5 2 9-3 3-6 2 5-8-3-12z" fill="#ffc831"/><path d="M2 13q2 10 11 10t9-8q-4 5-9 4z" fill="#f2305b"/><circle cx="12" cy="12" r="5" fill="#6a3ad0"/><path d="M6 10q5-3 8 0-2 1-3 2-3 2-5-2z" fill="#ff8a20"/></svg></button>
            <button type="button" class="task running" aria-label="Chrome"><svg viewBox="0 0 24 24"><circle cx="12" cy="12" r="11" fill="#fbc116"/><path d="M12 12 2.500 6.500A11 11 0 0 1 21.500 6.500L12 6.500z" fill="#de4a3c"/><path d="M2.500 6.500A11 11 0 0 0 12 23l5-8-5 2-5-2z" fill="#2aa152"/><circle cx="12" cy="12" r="5.500" fill="#fff"/><circle cx="12" cy="12" r="4.300" fill="#4287f0"/></svg></button>
            <button type="button" class="task running current" aria-label="SketchUp"><svg class="icon"><use href="#sketchup"/></svg></button>
            <button type="button" class="task running" aria-label="压缩文件"><svg viewBox="0 0 24 24"><path d="M0 1h24v13H0z" fill="#2fa8e8"/><path d="M0 9l8-4 16 6v3H0z" fill="#6cc6f2"/><path d="M0 14h24v3H0z" fill="#2b6fb0"/><path d="M0 17h24v2H0z" fill="#f2c22e"/><path d="M0 19h24v4H0z" fill="#6aa83a"/><path d="M15 1h5v22h-5z" fill="#7a3a18"/><path d="M14 12h7v6h-7z" fill="none" stroke="#f0c860" stroke-width="1.500"/></svg></button>
            <div class="tray-icons">
                <button type="button" class="chevron" aria-label="显示隐藏的图标"><svg viewBox="0 0 12 8"><path d="M1 7l5-5 5 5"/></svg></button>
                <button type="button" class="ime">英</button>
                <button type="button" class="ime-logo" aria-label="搜狗输入法"><svg class="icon"><use href="#sogou"/></svg></button>
                <button type="button" class="clock"><time>16:54</time><time>2021/5/19</time></button>
                <button type="button" class="notifications" aria-label="通知"><svg viewBox="0 0 16 16"><path d="M0 1h16v11H9l-3 3v-3H0z"/><path d="M3 4h10M3 6.500h10M3 9h7" class="lines"/></svg><span class="count">4</span></button>
            </div>
        </footer>

        <div class="ime-bar">
            <svg class="icon ime-bar-logo"><use href="#sogou"/></svg>
            <button type="button">英</button>
            <button type="button" aria-label="标点"><svg viewBox="0 0 16 16"><circle cx="4" cy="5" r="2"/><path d="M9 9a2 2 0 1 1 3 2l-2 3H9l1-3z"/></svg></button>
            <button type="button" aria-label="表情"><svg viewBox="0 0 16 16"><circle cx="8" cy="8" r="7" class="ring"/><path d="M5 9q3 4 6 0M6 5v2M10 5v2" class="ring"/></svg></button>
            <button type="button" aria-label="语音"><svg viewBox="0 0 16 16"><rect x="5" y="1" width="6" height="9" rx="3"/><path d="M3 7q0 5 5 5t5-5M8 12v3M5 15h6" class="ring"/></svg></button>
            <button type="button" aria-label="键盘"><svg viewBox="0 0 16 16"><rect x="0" y="2" width="16" height="12" rx="1"/><path d="M2 5h12M2 8h12" class="keys"/><path d="M4 11h8" stroke="#fff"/></svg></button>
            <button type="button" class="disabled" aria-label="账户"><svg viewBox="0 0 16 16"><circle cx="7" cy="4" r="3"/><path d="M2 14V9h10v5z"/><path d="M9 9h5v5H9z" fill="#fff" stroke="#b4bcd0"/></svg></button>
            <button type="button" aria-label="皮肤"><svg viewBox="0 0 16 16"><path d="M1 4l4-3q3 2 6 0l4 3-2 4-1-1v8H4V7L3 8z"/></svg></button>
            <button type="button" aria-label="工具箱"><svg viewBox="0 0 16 16"><path d="M1 2h6v6H1zM1 9h6v6H1zM9 9h6v6H9z"/><path d="M9.500 2.500h5v5h-5z" class="ring"/></svg></button>
        </div>

        <div class="watermark">
            <span class="ear ear-left"></span>
            <span class="ear ear-right"></span>
            <svg viewBox="115 535 205 210" aria-hidden="true">
                <path class="band" d="M183 691Q164 698 164 676V562Q166 542 187 547L283 596Q326 632 285 667L200 725Q155 750 130 704Q125 695 125 680V592Q125 580 136 570"/>
                <path class="play" d="M192 612 232 636 192 657zM243 618h7v38h-7z"/>
            </svg>
            <div>
                <p class="brand"><span>溜</span><span>溜</span><span>自</span><span>学</span></p>
                <p class="site">zixue.3D66.COM</p>
            </div>
        </div>
    </div>

    <script src="tools.js"></script>
</body>
</html>
```
FILE: styles.css
```css
* {
    box-sizing: border-box;
}
body {
    margin: 0;
    font-family: "Noto Sans", "Noto Sans CJK SC", sans-serif;
    font-size: 12px;
    color: #000;
    background-color: #f0f0f0;
    overflow: hidden;
}
h1, h2, p {
    margin: 0;
    font-size: 12px;
    font-weight: normal;
}
button {
    padding: 0;
    border: none;
    background: none;
    font: inherit;
    color: inherit;
    cursor: pointer;
}
.sprite {
    display: none;
}
.icon {
    width: 24px;
    height: 24px;
    fill: none;
    stroke: #222;
    stroke-width: 1.2;
}
.dots {
    fill: #d8192b;
    stroke: none;
}
.dots-small {
    fill: #a04038;
}
.tiny {
    font-size: 8px;
    fill: #222;
    stroke: none;
}
.serif {
    font-family: "Liberation Serif", serif;
    font-size: 10px;
    font-weight: bold;
}
.app {
    position: relative;
    display: flex;
    flex-direction: column;
    height: 100vh;
}

/* title and menu */
.titlebar {
    display: flex;
    align-items: center;
    height: 24px;
    padding: 0 2px 0 3px;
    background-color: #fff;
}
.app-logo {
    width: 15px;
    height: 15px;
    margin-right: 5px;
}
.window-controls {
    display: flex;
    margin-left: auto;
}
.window-controls button {
    display: flex;
    align-items: center;
    justify-content: center;
    width: 46px;
    height: 20px;
}
.window-controls svg {
    width: 11px;
    height: 11px;
    fill: none;
    stroke: #000;
}
.menubar {
    display: flex;
    gap: 15px;
    height: 18px;
    padding-left: 7px;
    background-color: #fff;
}
.menubar button {
    line-height: 18px;
}

/* toolbars */
.toolbars {
    background-color: #eee;
}
.toolbar-row {
    display: flex;
    height: 38px;
}
.row-building {
    height: 39px;
    padding-left: 64px;
}
.toolbar {
    display: flex;
    align-items: center;
    padding: 1px 1px 1px 10px;
    border-right: 1px solid #a0a0a0;
    border-bottom: 1px solid #a0a0a0;
    background: radial-gradient(circle, #b4b4b4 1px, transparent 1px) 3px 2px / 4px 4px repeat-y #f1f1f1;
}
.toolbar-components {
    margin-left: 37px;
}
.toolbar-layers {
    margin-left: 806px;
}
.toolbar-large .icon {
    width: 30px;
    height: 30px;
}
.tool {
    position: relative;
    display: flex;
    align-items: center;
    justify-content: center;
    width: 34px;
    height: 34px;
}
.active {
    background-color: #c0dcf3;
    box-shadow: inset 0 0 0 1px #90c8f6;
}
.split {
    display: flex;
}
.split .tool {
    width: 36px;
}
.drop {
    width: 20px;
    height: 34px;
}
.drop::before {
    content: "";
    display: block;
    margin: 0 auto 4px 3px;
    width: 0;
    border: 6px solid transparent;
    border-top: 7px solid #000;
    border-bottom: none;
}
.separator {
    width: 2px;
    height: 32px;
    margin: 0 3px;
    border-left: 1px solid #888;
}
.letter {
    position: absolute;
    top: 0;
    right: 0;
    font-family: "Liberation Mono", monospace;
    font-size: 12px;
    font-weight: bold;
    line-height: 12px;
}
.letter-low {
    top: auto;
    bottom: 4px;
    color: #000;
}
.tint-indigo { color: #3b3bb8; }
.tint-lime { color: #2ad62a; }
.tint-olive { color: #8a9a2a; }
.tint-crimson { color: #a82040; }
.tint-teal { color: #4f9a8c; }
.tint-black { color: #333; }
.tint-blue { color: #1414e0; }
.tint-red { color: #e04a4a; }
.tint-green { color: #12d832; }
.tint-brown { color: #8d6b42; }
.tint-orange { color: #ff8412; }
.tint-magenta { color: #e81ee8; }

/* workspace */
.workspace {
    position: relative;
    display: flex;
    flex: 1;
    min-height: 0;
}
.sidebar {
    width: 73px;
    padding-top: 57px;
    background-color: #f0f0f0;
}
.toolset {
    display: flex;
    flex-wrap: wrap;
    padding: 7px 1px 2px 2px;
    border-bottom: 1px solid #a0a0a0;
    background: radial-gradient(circle, #b4b4b4 1px, transparent 1px) 3px 0 / 4px 4px repeat-x #f1f1f1;
}
.toolset .separator {
    width: 64px;
    height: 2px;
    margin: 3px 2px;
    border-left: none;
    border-top: 1px solid #888;
}
.viewport {
    flex: 1;
    min-width: 0;
    border-top: 2px solid #6b8c98;
    border-left: 1px solid #777;
}
.scene {
    display: block;
    width: 100%;
    height: 100%;
}
.disc {
    fill: #5d6b73;
    stroke: #000;
    stroke-width: 2;
    shape-rendering: crispEdges;
}
.axis {
    fill: none;
    stroke-width: 1;
    shape-rendering: crispEdges;
}
.red { stroke: #b00d22; }
.green { stroke: #1a9e2c; }
.blue { stroke: #1010b0; }
.dotted { stroke-dasharray: 1 3; }
.faint { opacity: 0.3; }
.radius {
    stroke: #000;
    stroke-dasharray: 2 2;
}
.cursor {
    fill: none;
    stroke: #1010c8;
}
.node {
    stroke: #fff;
    stroke-width: 1.5;
}
.node-edge { fill: #4d9436; }
.node-center { fill: #0f5cab; }
.pointer-arrow {
    position: absolute;
    top: 0;
    left: 0;
    width: 1200px;
    height: 440px;
    fill: #ed1c24;
    pointer-events: none;
}

/* right tray */
.tray {
    width: 286px;
    border-left: 6px solid #f0f0f0;
    background-color: #f4f7fc;
}
.tray-header {
    display: flex;
    align-items: center;
    height: 21px;
    padding: 0 4px;
    background: linear-gradient(#c0cddd, #d8e4f2);
}
.pin {
    margin-left: auto;
    width: 10px;
    height: 20px;
    margin-right: 8px;
}
.pin svg {
    width: 10px;
    height: 10px;
    fill: none;
    stroke: #000;
}
.close {
    width: 12px;
    height: 12px;
    background-color: #c75050;
    color: #fff;
    font-size: 11px;
    font-weight: bold;
    line-height: 8px;
}
.panel {
    display: flex;
    align-items: center;
    height: 18px;
    margin-bottom: 1px;
    border: 1px solid #a8a8a8;
    border-width: 1px 0 1px 1px;
    background: linear-gradient(#eee, #b6b6b6);
}
.panel-title {
    display: flex;
    align-items: center;
    flex: 1;
    gap: 7px;
    padding-left: 8px;
    line-height: 16px;
}
.panel-title::before {
    content: "";
    border: 4px solid transparent;
    border-left: 6px solid #000;
    border-right: none;
}
.panel-close {
    width: 13px;
    height: 13px;
    margin-right: 3px;
    border: 1px solid #999;
    background-color: #eee;
    line-height: 11px;
}

/* status bar */
.statusbar {
    display: flex;
    align-items: center;
    height: 29px;
    padding: 2px 5px 0 6px;
    border-top: 1px solid #fff;
    background-color: #f0f0f0;
}
.status-icon {
    width: 14px;
    height: 14px;
    margin-right: 14px;
    fill: none;
    stroke: #000;
}
.status-icon path {
    fill: #000;
    stroke: none;
}
.muted {
    opacity: 0.45;
}
.statusbar p {
    padding-left: 10px;
    border-left: 1px solid #bbb;
    font-size: 16px;
    line-height: 14px;
}
kbd {
    font: 12px "Noto Sans", sans-serif;
}
.measurements {
    width: 150px;
    height: 24px;
    margin-left: auto;
    border: 1px solid #a5a9ae;
    background-color: #fff;
}

/* taskbar */
.taskbar {
    display: flex;
    height: 40px;
    background: linear-gradient(90deg, #d4d4d4 0%, #d6d6d6 50%, #e8e8e6 78%, #d8d8d8 88%, #d8d8d8 100%);
}
.task {
    display: flex;
    align-items: center;
    justify-content: center;
    width: 49px;
    height: 40px;
}
.task-start {
    width: 47px;
}
.task svg {
    width: 24px;
    height: 24px;
}
.outline {
    fill: none;
    stroke: #111;
    stroke-width: 1.5;
}
.thick {
    stroke-width: 2.4;
}
.running {
    background: linear-gradient(#0f70c4, #0f70c4) center bottom / 40px 2px no-repeat;
}
.current {
    background-color: #f0f0f0;
    background-size: 49px 2px;
}
.tray-icons {
    display: flex;
    align-items: center;
    margin-left: auto;
    padding-right: 16px;
}
.tray-icons button {
    height: 40px;
}
.chevron {
    width: 24px;
}
.chevron svg {
    width: 12px;
    height: 8px;
    fill: none;
    stroke: #111;
    stroke-width: 1.3;
}
.ime {
    width: 24px;
    font-size: 15px;
    color: #666;
}
.ime-logo {
    display: flex;
    align-items: center;
    justify-content: center;
    width: 32px;
}
.ime-logo .icon {
    width: 16px;
    height: 16px;
}
.clock {
    width: 76px;
    line-height: 19px;
}
.clock time {
    display: block;
}
.notifications {
    position: relative;
    width: 32px;
    margin-left: 4px;
}
.notifications svg {
    width: 16px;
    height: 16px;
}
.lines {
    stroke: #fff;
}
.count {
    position: absolute;
    right: 0;
    bottom: 5px;
    width: 16px;
    height: 16px;
    border: 1px solid #777;
    border-radius: 50%;
    background-color: #ccc;
    line-height: 14px;
    font-weight: bold;
}

/* floating input method bar */
.ime-bar {
    position: absolute;
    right: 0;
    bottom: 275px;
    display: flex;
    align-items: center;
    height: 24px;
    border: 1px solid #a3afc4;
    border-right: none;
    background-color: #fff;
}
.ime-bar-logo {
    width: 28px;
    height: 28px;
    margin: 0 2px 0 -13px;
}
.ime-bar button {
    width: 22px;
    height: 22px;
    color: #1b6fc0;
    font-size: 15px;
    font-weight: bold;
    line-height: 22px;
}
.ime-bar button svg {
    display: block;
    margin: 0 auto;
    width: 16px;
    height: 16px;
    fill: #1b6fc0;
}
.ime-bar .ring {
    fill: none;
    stroke: #1b6fc0;
    stroke-width: 1.5;
}
.keys {
    stroke: #fff;
    stroke-dasharray: 2 1;
}
.ime-bar .disabled svg {
    fill: #b4bcd0;
}

/* watermark card */
.watermark {
    position: absolute;
    right: 106px;
    bottom: 27px;
    display: flex;
    align-items: center;
    width: 340px;
    height: 160px;
    padding-left: 25px;
    background-color: #232f56;
    color: #d0d1d4;
}
.watermark svg {
    width: 68px;
    height: 70px;
    margin-right: 22px;
}
.band {
    fill: none;
    stroke: #d0d1d4;
    stroke-width: 16;
    stroke-linecap: round;
}
.play {
    fill: #d0d1d4;
}
.brand {
    display: flex;
    gap: 9px;
    font-size: 43px;
    font-weight: 900;
    line-height: 48px;
}
.site {
    font-family: "DejaVu Sans", sans-serif;
    font-size: 24px;
    line-height: 28px;
}
.ear {
    position: absolute;
    bottom: 160px;
    width: 26px;
    height: 16px;
    border-radius: 13px 13px 0 0;
    background-color: rgba(255, 255, 255, 0.8);
    box-shadow: 0 0 3px #999;
    clip-path: inset(-4px -4px 0 -4px);
}
.ear-left {
    left: 143px;
}
.ear-right {
    left: 172px;
}
```
FILE: tools.js
```js
// data-tools: "name", "name:tint:letter", "+" adds a drop-down, "*" marks it active, "|" is a separator
function addTool(bar, token) {
    if (token === '|') {
        const separator = document.createElement('span');
        separator.className = 'separator';
        bar.appendChild(separator);
        return;
    }

    const active = token.includes('*');
    const dropdown = token.includes('+');
    const [name, tint, letter] = token.replace(/[*+]/g, '').split(':');

    const button = document.createElement('button');
    button.type = 'button';
    button.className = 'tool' + (tint ? ' tint-' + tint : '');
    button.setAttribute('aria-label', name.replace(/-/g, ' '));
    button.innerHTML = `<svg class="icon"><use href="#${name}"/></svg>`;
    if (letter) {
        button.innerHTML += `<span class="letter${letter === '▼' ? ' letter-low' : ''}">${letter}</span>`;
    }

    let item = button;
    if (dropdown) {
        item = document.createElement('div');
        item.className = 'split';
        item.appendChild(button);
        item.insertAdjacentHTML('beforeend', `<button type="button" class="drop" aria-label="${name} menu"></button>`);
    }
    if (active) {
        item.classList.add('active');
    }
    bar.appendChild(item);
}

document.querySelectorAll('[data-tools]').forEach(bar => {
    bar.dataset.tools.split(' ').forEach(token => addTool(bar, token));
});
```
